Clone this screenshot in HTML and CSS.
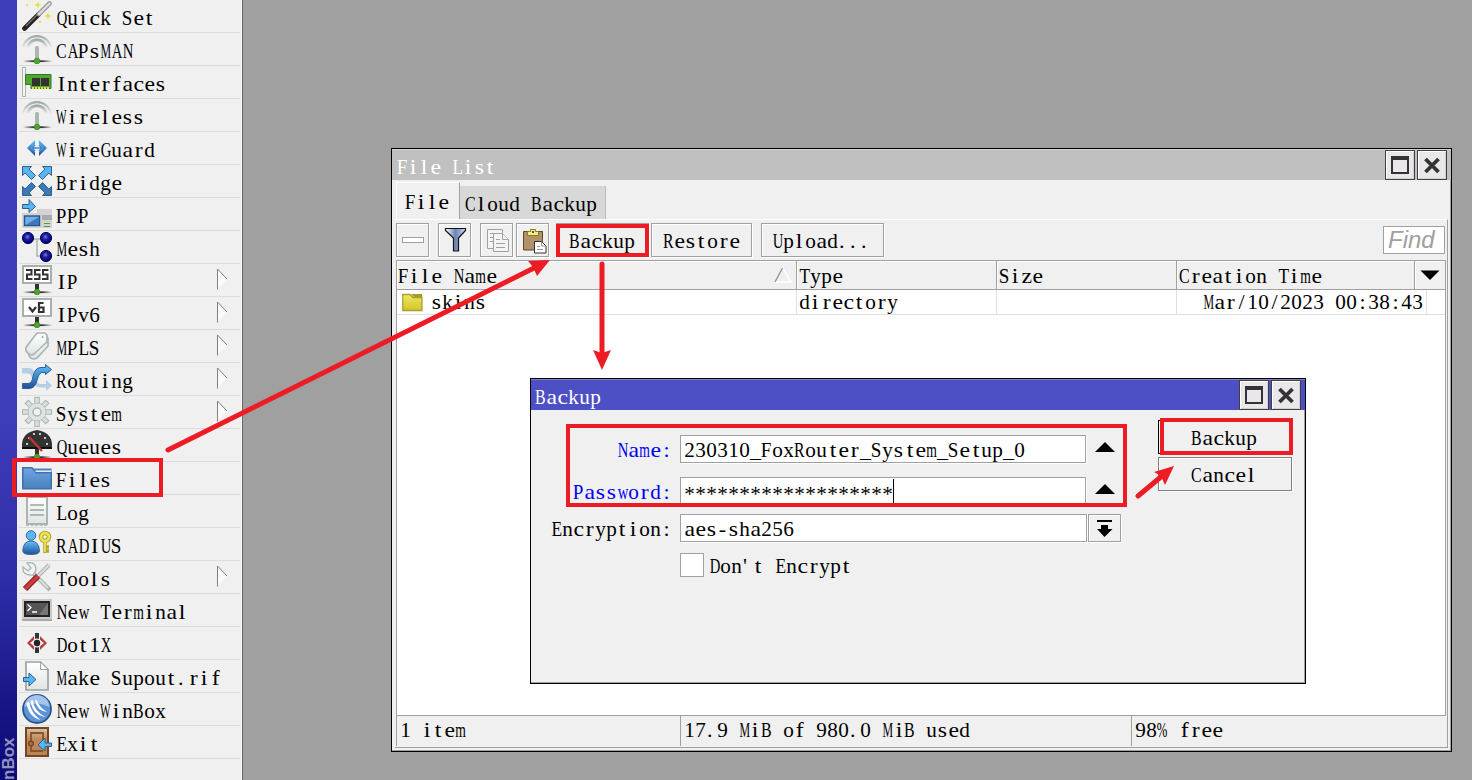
FILE: index.html
```html
<!DOCTYPE html>
<html lang="en">
<head>
<meta charset="utf-8">
<title>WinBox</title>
<link rel="stylesheet" href="styles.css">
</head>
<body>
<svg class="defs" width="0" height="0">
  <defs>
    <linearGradient id="blue" x1="0" y1="0" x2="0" y2="1"><stop offset="0" stop-color="#62c0ff"/><stop offset="1" stop-color="#1f4f98"/></linearGradient>
    <linearGradient id="fold" x1="0" y1="0" x2="0" y2="1"><stop offset="0" stop-color="#6ea6e0"/><stop offset="1" stop-color="#4a80bd"/></linearGradient>
    <linearGradient id="paper" x1="0" y1="0" x2="0" y2="1"><stop offset="0" stop-color="#fff"/><stop offset="1" stop-color="#dfe4e2"/></linearGradient>
    <linearGradient id="base"><stop offset="0" stop-color="#333" stop-opacity="0"/><stop offset=".35" stop-color="#333"/><stop offset=".65" stop-color="#333"/><stop offset="1" stop-color="#333" stop-opacity="0"/></linearGradient>
    <radialGradient id="ball" cx=".45" cy=".4" r=".55"><stop offset="0" stop-color="#7f80dc"/><stop offset=".4" stop-color="#2222a0"/><stop offset="1" stop-color="#000070"/></radialGradient>
    <linearGradient id="wood" x1="0" y1="0" x2="0" y2="1"><stop offset="0" stop-color="#dcc2a8"/><stop offset=".4" stop-color="#c08a5c"/><stop offset="1" stop-color="#bb8252"/></linearGradient>
    <linearGradient id="arc" x1="0" y1="0" x2="0" y2="1"><stop offset="0" stop-color="#9faaa8"/><stop offset="1" stop-color="#9faaa8" stop-opacity="0"/></linearGradient>
    <linearGradient id="gold" x1="0" y1="0" x2="0" y2="1"><stop offset="0" stop-color="#efe860"/><stop offset="1" stop-color="#cfc62c"/></linearGradient>
    <symbol id="node" viewBox="0 0 30 30"><rect x="1" y="26.3" width="29" height="1.8" fill="url(#base)"/><circle cx="15" cy="27" r="2.9" fill="#4fa32c" stroke="#3b8a20" stroke-width=".6"/></symbol>
    <symbol id="antenna" viewBox="0 0 30 30"><path d="M1 14A14.2 14.2 0 0 1 29 14" fill="none" stroke="url(#arc)" stroke-width="2.2"/><path d="M5.5 14A9.6 9.6 0 0 1 24.5 14" fill="none" stroke="url(#arc)" stroke-width="3"/><rect x="13" y="12" width="4" height="14" rx="1.5" fill="#abb6b3"/><use href="#node"/></symbol>
    <symbol id="corner" viewBox="0 0 14 14"><path d="M.5.5H9.5L7 3.2 13.5 9.5 9.5 13.5 3.2 7 .5 9.5Z" fill="currentColor" stroke="#315f8c"/></symbol>
  </defs>
</svg>
<main class="desktop">
  <aside class="brand"><span>nBox</span></aside>
  <nav class="menu">
    <div class="item"><svg class="ico" viewBox="0 0 30 30"><path d="M2.5 27.5 17 13" stroke="#222" stroke-width="4.6" stroke-linecap="round"/><path d="M4 25 16 13" stroke="#777" stroke-width="1.2"/><path d="M17 13 27.5 2.5" stroke="#999" stroke-width="4.6" stroke-linecap="round"/><path d="M17 13 27.5 2.5" stroke="#ddd" stroke-width="2.4" stroke-linecap="round"/><path d="M16 0 17 3 20 4 17 5 16 8 15 5 12 4 15 3ZM26 11 27 14 30 15 27 16 26 19 25 16 22 15 25 14Z" fill="#e5e046"/><path d="M4 3h2v2H4zM17 20h2v2h-2z" fill="#e5e046"/></svg><span class="t">Quick Set</span></div>
    <div class="item"><svg class="ico"><use href="#antenna"/></svg><span class="t">CAPsMAN</span></div>
    <div class="item"><svg class="ico" viewBox="0 0 30 30"><rect x=".5" y=".5" width="3" height="29" fill="#f4f6f5" stroke="#a9b4b1"/><path d="M3.5 7.5h25.5v14H9v-4H3.5z" fill="#52a630" stroke="#2f7a1b"/><path d="M10 11h8v8h-8zM19 11h8v8h-8z" fill="#333"/><path d="M10 21h17" stroke="#e8e040" stroke-width="2" stroke-dasharray="2 1"/></svg><span class="t">Interfaces</span></div>
    <div class="item"><svg class="ico"><use href="#antenna"/></svg><span class="t">Wireless</span></div>
    <div class="item"><svg class="ico" viewBox="0 0 30 30"><path d="M13 7v4L9 15l4 4v4L5 15ZM17 7v4l4 4-4 4v4l8-8Z" fill="url(#blue)"/><path d="M9.500 15h11M13 12l-3 3 3 3M17 12l3 3-3 3" fill="none" stroke="#3a86cd" stroke-width="1.500"/></svg><span class="t">WireGuard</span></div>
    <div class="item"><svg class="ico" viewBox="0 0 30 30"><g class="light"><use href="#corner" width="14" height="14"/><use href="#corner" width="14" height="14" transform="translate(30) scale(-1 1)"/></g><g class="deep"><use href="#corner" width="14" height="14" transform="translate(0 30) scale(1 -1)"/><use href="#corner" width="14" height="14" transform="translate(30 30) scale(-1)"/></g></svg><span class="t">Bridge</span></div>
    <div class="item"><svg class="ico" viewBox="0 0 30 30"><path d="M15 10h15v19H0V14h15z" fill="#d3d3d3"/><path d="M20 16h10v5H20z" fill="#aaa"/><path d="M22 24.500h6M22 27.500h6" stroke="#4da62b"/><rect x="2.500" y="17" width="15" height="9.500" fill="#75aee6" stroke="#22558c" stroke-width="1.400"/><path d="M3.500 26 17 18v8z" fill="#3b78bd"/><path d="M.5 5.500H7V.5l6.500 7-6.500 6V9.500H.5Z" fill="#57b7f5" stroke="#315f8c"/></svg><span class="t">PPP</span></div>
    <div class="item"><svg class="ico" viewBox="0 0 30 30"><path d="M10 7h10M15 7v17h5" fill="none" stroke="#abb6b3" stroke-width="1.500"/><g fill="url(#ball)" stroke="#00006a"><circle cx="6" cy="6" r="5.600"/><circle cx="24" cy="6" r="5.600"/><circle cx="24" cy="24" r="5.600"/></g></svg><span class="t">Mesh</span></div>
    <div class="item sub"><svg class="ico" viewBox="0 0 30 30"><path d="M13 18h4v9h-4z" fill="#333"/><rect x="1" y="1" width="28" height="17" fill="#fff" stroke="#a6b0ae" stroke-width="2"/><path d="M4 5H9.500v4.500H5V14H10.500M18.500 5H13v4.500h4.500V14H12M26.500 5H21v4.500h4.500V14H20" fill="none" stroke="#333" stroke-width="2"/><use href="#node"/></svg><span class="t">IP</span><svg class="tri" viewBox="0 0 12 22"><path d="M1.500 1 11 11 1.500 21Z" fill="#fafafa"/><path d="M1.500 21.500V1L11 11" fill="none" stroke="#808080"/></svg></div>
    <div class="item sub"><svg class="ico" viewBox="0 0 30 30"><path d="M13 18h4v9h-4z" fill="#333"/><rect x="1" y="1" width="28" height="17" fill="#fff" stroke="#a6b0ae" stroke-width="2"/><path d="m7 9 3.500 4.500L14 9M21.500 5H17v9h4.500V9.500H17" fill="none" stroke="#333" stroke-width="2.200"/><use href="#node"/></svg><span class="t">IPv6</span><svg class="tri" viewBox="0 0 12 22"><path d="M1.500 1 11 11 1.500 21Z" fill="#fafafa"/><path d="M1.500 21.500V1L11 11" fill="none" stroke="#808080"/></svg></div>
    <div class="item sub"><svg class="ico" viewBox="0 0 30 30"><g fill="url(#paper)" stroke="#a9b5b2" stroke-width="1.700" stroke-linejoin="round"><path d="M18 7h8v8L15 27q-3 2-6 0-4-3-1-7Z"/><path d="M15 2h8l2 2v7L12 23q-3 2-6-1-4-3-1-7Z"/></g><circle cx="20.500" cy="6" r="1" fill="#97a5a1"/></svg><span class="t">MPLS</span><svg class="tri" viewBox="0 0 12 22"><path d="M1.500 1 11 11 1.500 21Z" fill="#fafafa"/><path d="M1.500 21.500V1L11 11" fill="none" stroke="#808080"/></svg></div>
    <div class="item sub"><svg class="ico" viewBox="0 0 30 30"><path d="M0 4h7q5 0 6 7 1 9 6 9h5v-4l6 5.500-6 5.500v-3.500h-6q-6 0-8-9-1-5-4-5H0Z" fill="#b5cee3"/><path d="M.5 24.500V19.500H6q4 0 5-7 2-9 8-9h4.500V.5l6 5-6 5V8.500H20q-3 0-5 8-2 8-8 8Z" fill="url(#blue)" stroke="#2d6294"/></svg><span class="t">Routing</span><svg class="tri" viewBox="0 0 12 22"><path d="M1.500 1 11 11 1.500 21Z" fill="#fafafa"/><path d="M1.500 21.500V1L11 11" fill="none" stroke="#808080"/></svg></div>
    <div class="item sub"><svg class="ico" viewBox="0 0 30 30"><g stroke="#a9b5b2" stroke-width="5.500"><path d="M15 0v30M0 15h30M4.400 4.400l21.200 21.200M25.600 4.400 4.400 25.600"/></g><g stroke-width="3.500"><path d="M15 1v28M1 15h28M5.200 5.200l19.600 19.600M24.800 5.200 5.200 24.800" stroke="#d9dfdd"/></g><circle cx="15" cy="15" r="9" fill="#dfe4e2" stroke="#b7c0be"/><circle cx="15" cy="15" r="4" fill="#f2f2f2" stroke="#a9b5b2" stroke-width="1.500"/></svg><span class="t">System</span><svg class="tri" viewBox="0 0 12 22"><path d="M1.500 1 11 11 1.500 21Z" fill="#fafafa"/><path d="M1.500 21.500V1L11 11" fill="none" stroke="#808080"/></svg></div>
    <div class="item"><svg class="ico" viewBox="0 0 30 30"><path d="M13 18h4v9h-4z" fill="#333"/><path d="M0 19V14Q1 2 15 0 29 2 30 14v5Z" fill="#333"/><path d="M0 17h30v2H0z" fill="#111"/><path d="M4 13h2v2H4zM6 7h2v2H6zM11 3h2v2h-2zM17 3h2v2h-2zM22 7h2v2h-2zM24 13h2v2h-2z" fill="#ccc"/><path d="m7 7 13 14" stroke="#c43636" stroke-width="2.400"/><use href="#node"/></svg><span class="t">Queues</span></div>
    <div class="item"><svg class="ico" viewBox="0 0 30 30"><path d="M.8 4.800H10l4 5h15.200v16H.8Z" fill="url(#fold)" stroke="#3d74ad" stroke-width="1.600"/><path d="M11 5.500h18.500V9H14Z" fill="#4a80bd"/><path d="M13.500 8.200H29" stroke="#fff" stroke-width="1.300"/></svg><span class="t">Files</span></div>
    <div class="item"><svg class="ico" viewBox="0 0 30 30"><path d="M5 1h20v27H5z" fill="url(#paper)" stroke="#a9b5b2" stroke-width="2"/><path d="M4 .8h22M4 28.800h22" stroke="#a9b5b2" stroke-width="2" stroke-dasharray="3 1.500"/><path d="M8 9h14M8 14h14M8 19h14" stroke="#98a5a1" stroke-width="1.600"/></svg><span class="t">Log</span></div>
    <div class="item"><svg class="ico" viewBox="0 0 30 30"><path d="M.8 22Q1 12 9 12t8.500 10q0 3.500-8.500 3.500T.8 22Z" fill="url(#blue)" stroke="#426992"/><circle cx="9" cy="6.500" r="4.800" fill="#57b7f5" stroke="#426992"/><circle cx="23" cy="8" r="4" fill="none" stroke="#aaa12a" stroke-width="4.500"/><path d="M23 13v11M24 18h3M24 22h3" stroke="#b1a72a" stroke-width="3.500"/><circle cx="23" cy="8" r="4" fill="none" stroke="#eae14f" stroke-width="2.800"/><path d="M23 13v10" stroke="#eae14f" stroke-width="1.800"/></svg><span class="t">RADIUS</span></div>
    <div class="item sub"><svg class="ico" viewBox="0 0 30 30"><path d="m11 11 17 17M14 16 27 3" stroke="#a9b5b2" stroke-width="4"/><path d="m12 12 14 14M15 15 28 2" stroke="#dce1df" stroke-width="1.800"/><path d="M5 1Q14-1 14 8l-3 5Q0 14 1 5l5 4 3-3Z" fill="#f4f6f5" stroke="#a9b5b2" stroke-width="1.300"/><path d="M3 27 16 14" stroke="#8e1f24" stroke-width="6"/><path d="M3 27 16 14" stroke="#c93d3d" stroke-width="3.500"/></svg><span class="t">Tools</span><svg class="tri" viewBox="0 0 12 22"><path d="M1.500 1 11 11 1.500 21Z" fill="#fafafa"/><path d="M1.500 21.500V1L11 11" fill="none" stroke="#808080"/></svg></div>
    <div class="item"><svg class="ico" viewBox="0 0 30 30"><path d="M0 4h30v22H0z" fill="#c9c9c9"/><path d="M0 24h30v2H0z" fill="#aaa"/><rect x="3" y="7" width="24" height="14" fill="#555" stroke="#222" stroke-width="2"/><path d="m17 20 9-12v12z" fill="#777"/><path d="m5.500 9.500 3.500 3-3.500 3.500M10 17h5" fill="none" stroke="#fff" stroke-width="1.300"/></svg><span class="t">New Terminal</span></div>
    <div class="item"><svg class="ico" viewBox="0 0 30 30"><path d="M13 5h4v20h-4z" fill="#333"/><path d="M12 8v4l-4 3 4 3v4l-7-7ZM18 8v4l4 3-4 3v4l7-7Z" fill="#b53b45"/><circle cx="15" cy="15" r="4.500" fill="#eee"/><circle cx="15" cy="15" r="3.200" fill="#222"/></svg><span class="t">Dot1X</span></div>
    <div class="item"><svg class="ico" viewBox="0 0 30 30"><path d="M4 1h14.500L26 8.500V29H4z" fill="url(#paper)" stroke="#98a5a1" stroke-width="1.700"/><path d="M18.500 1v7.500H26Z" fill="#fff" stroke="#98a5a1"/><path d="M1.500 16.500H7v-4.500l7 6.500-7 6.500v-4.500H1.500Z" fill="#57b7f5" stroke="#315f8c"/></svg><span class="t">Make Supout.rif</span></div>
    <div class="item"><svg class="ico" viewBox="0 0 30 30"><circle cx="15" cy="15" r="14" fill="#5d94d8" stroke="#2a568d" stroke-width="1.800"/><path d="M2.500 13A12.500 12 0 0 1 27.500 13Q15 6 2.500 13Z" fill="#a6c4ea"/><path d="M4.500 9q2 14 14 17Q9 19 7 8ZM8.500 7q2 14 15 16Q12 17 10.500 6ZM13 6q2 11 12 12Q17 13 14.500 6Z" fill="#fff"/></svg><span class="t">New WinBox</span></div>
    <div class="item"><svg class="ico" viewBox="0 0 30 30"><rect x="4" y="1" width="22" height="28" fill="url(#wood)" stroke="#754420" stroke-width="2"/><path d="M9 15V6h12v8M9 18v6h12" fill="none" stroke="#895429" stroke-width="1.800"/><circle cx="9" cy="16.500" r="2.400" fill="#a96f43" stroke="#754420" stroke-width="1.300"/><path d="M29.500 16H23v-5l-7 7 7 6v-4.500h6.500Z" fill="#57b7f5" stroke="#315f8c"/></svg><span class="t">Exit</span></div>
  </nav>

  <section class="window files">
    <header class="bar"><span class="t">File List</span><div class="ctl"><i><svg viewBox="0 0 28 28"><path d="M6 7h16v15H6z" fill="none" stroke="#333" stroke-width="2"/><path d="M5 7h18" stroke="#333" stroke-width="4"/></svg></i><i><svg viewBox="0 0 28 28"><path d="m7.500 8 13 13m0-13-13 13" stroke="#333" stroke-width="3.800"/></svg></i></div></header>
    <div class="tabs"><span class="tab on t">File</span><span class="tab t">Cloud Backup</span></div>
    <div class="pane">
      <div class="tools">
        <span class="btn sq"><svg viewBox="0 0 31 32"><rect x="5.500" y="13.500" width="21" height="5" fill="#fff" stroke="#a0a0a0"/></svg></span>
        <span class="btn sq gap"><svg viewBox="0 0 31 32"><defs><linearGradient id="fun"><stop offset="0" stop-color="#fff"/><stop offset=".5" stop-color="#6f83b4"/><stop offset="1" stop-color="#cdd8ff"/></linearGradient></defs><path d="M6.500 4.500h20v2L19.500 14v13h-5V14L6.500 6.500Z" fill="url(#fun)" stroke="#111" stroke-width="1.200"/></svg></span>
        <span class="btn sq gap"><svg viewBox="0 0 31 32"><g fill="#f4f4f4" stroke="#a0a0a0"><path d="M6.500 5.500h15v19h-15z"/><path d="M9 9.500h9M9 13.500h5M9 17.500h5" /><path d="M12.500 9.500h9l6 6v12h-15z"/><path d="M21.500 9.500v6h6M15 15.500h4M15 19.500h9M15 23.500h9"/></g></svg></span>
        <span class="btn sq paste"><svg viewBox="0 0 31 32"><path d="M6.500 7.500h19v18.500h-19z" fill="#b09268" stroke="#5f4826"/><path d="M10.500 11.500v-4h3v-2h5v2h3v4z" fill="#f2ec83" stroke="#8a7a2a"/><path d="M15 7h2v2h-2z" fill="#554"/><path d="M17.500 17.500h7l4.500 4.500v7H17.500z" fill="#fff" stroke="#333"/><path d="M24.500 17.500V22H29M20 22.500h3M20 25.500h6" fill="none" stroke="#999"/></svg></span>
        <span class="btn b1 t">Backup</span><span class="btn b2 t">Restore</span><span class="btn b3 t">Upload...</span>
        <span class="find">Find</span>
      </div>
      <div class="table">
        <div class="tr th"><span class="c1"><b class="t">File Name</b><svg width="18" height="16" viewBox="0 0 18 16"><path d="M1 15H17L9 1" fill="none" stroke="#fff" stroke-width="1.500"/><path d="M1 15 8.500 1" stroke="#909090" stroke-width="1.300"/></svg></span><span class="c2 t">Type</span><span class="c3 t">Size</span><span class="c4 t">Creation Time</span><span class="c5"><svg width="20" height="10"><path d="M.5.500h19L10 10z"/></svg></span></div>
        <div class="tr td"><span class="c1"><svg width="21" height="19" viewBox="0 0 21 19"><path d="M.8 1.500H8l3 3h9v13H.8z" fill="url(#gold)" stroke="#aaa12c" stroke-width="1.300"/><path d="M9 1h11v3h-8z" fill="#a49d2c"/></svg><b class="t">skins</b></span><span class="c2 t">directory</span><span class="c3"></span><span class="c4 t">Mar/10/2023 00:38:43</span><span class="c5"></span></div>
      </div>
      <footer class="status"><span class="s1 t">1 item</span><span class="s2 t">17.9 MiB of 980.0 MiB used</span><span class="s3 t">98% free</span></footer>
    </div>
  </section>

  <section class="window dialog">
    <header class="bar"><span class="t">Backup</span><div class="ctl"><i><svg viewBox="0 0 28 28"><path d="M6 7h16v15H6z" fill="none" stroke="#333" stroke-width="2"/><path d="M5 7h18" stroke="#333" stroke-width="4"/></svg></i><i><svg viewBox="0 0 28 28"><path d="m7.500 8 13 13m0-13-13 13" stroke="#333" stroke-width="3.800"/></svg></i></div></header>
    <div class="content">
      <div class="form">
        <div class="row r1"><label class="t link">Name:</label><span class="field t">230310_FoxRouter_System_Setup_0</span><svg class="up" width="20" height="10"><path d="M0 10h20L10 0z"/></svg></div>
        <div class="row r2"><label class="t link">Password:</label><span class="field pass"><b class="t">*******************</b><i class="caret"></i></span><svg class="up" width="20" height="10"><path d="M0 10h20L10 0z"/></svg></div>
        <div class="row r3"><label class="t">Encryption:</label><span class="field wide t">aes-sha256</span><span class="drop"><svg width="16" height="18"><path d="M0 0h15v2H0zM4 5h7v4h4.500L7.500 17 0 9h4z"/></svg></span></div>
        <div class="row r4"><label></label><span class="check"></span><span class="t">Don't Encrypt</span></div>
      </div>
      <div class="actions"><span class="act main t">Backup</span><span class="act t">Cancel</span></div>
    </div>
  </section>

  <svg class="marks" width="1472" height="780" fill="none" stroke="#ed1c24" stroke-width="4">
    <path d="M14 460H161V495H14ZM558 226H647V255H558ZM568 426H1125V505H568ZM1162 420H1291V453H1162Z"/>
    <g stroke-width="5" stroke-linecap="round"><path d="M168 450 535 267.500M602 264V352M1138 496 1162 476"/></g>
    <g fill="#ed1c24" stroke="none"><path d="m550 260-22 1 5 6 4 9ZM602 370l-9-20 9 3 9-3ZM1174 466l-20 6 7 4 4 9Z"/></g>
  </svg>
</main>
<script src="grid.js"></script>
</body>
</html>
```
FILE: styles.css
```css
* { box-sizing: border-box; }
body { margin: 0; overflow: hidden; }
b, i { font-weight: normal; font-style: normal; }
svg { display: block; flex: none; }
.defs { position: absolute; }
.desktop {
  position: relative; display: flex; width: 1472px; height: 780px; overflow: hidden;
  background: #a0a0a0; color: #000;
  font: 22px/28px "Liberation Serif", "Times New Roman", serif;
}
.t { white-space: nowrap; word-spacing: 5.5px; font-kerning: none; }
.t u { display: inline-block; text-decoration: none; }

.brand {
  width: 17px; height: 780px; display: flex; align-items: flex-end; overflow: hidden;
  background: linear-gradient(#403dbb 0, #403dbb 400px, #2f2da6 580px, #12107e 740px, #0c0a78);
}
.brand span {
  writing-mode: vertical-rl; transform: rotate(180deg); width: 17px; height: 42px;
  font: bold 17px/17px "Liberation Sans", Arial, sans-serif; color: #9294bd;
}
.menu { width: 226px; height: 780px; padding-left: 2px; background: #f0f0f0; border-right: 1px solid #686868; box-shadow: inset -1px 0 #f8f8f8; }
.item { display: flex; width: 221px; height: 33px; padding: 1px 0 0 3px; border-bottom: 1px solid #dcdcdc; }
.item .t { margin: 3px 0 0 4px; }
.ico { width: 30px; height: 30px; }
.light { color: #57b7f5; }
.deep { color: #3b79b8; }
.tri { width: 12px; height: 22px; margin: 3px 12px 0 auto; }

.window { position: absolute; border: 1px solid #000; background: #f0f0f0; }
.files { left: 391px; top: 148px; width: 1061px; height: 604px; box-shadow: inset -1px -1px #a0a0a0; }
.dialog { left: 530px; top: 378px; width: 776px; height: 306px; box-shadow: inset -1px -1px #a0a0a0; }
.bar { display: flex; justify-content: space-between; height: 31px; padding: 1px 4px 0 5px; color: #fff; background: #c0c0c0; border-top: 1px solid #d4d4d4; }
.dialog .bar { background: #4d50c4; border-color: #7e80c8; padding-left: 4px; }
.bar .t { margin-top: 2px; }
.ctl { display: flex; gap: 2px; margin-top: -1px; }
.ctl i { width: 30px; height: 30px; border: 1px solid #404040; background: #e9e7e9; box-shadow: inset 1px 1px #fff, inset -1px -1px #d0d0d0; }
.tabs { display: flex; align-items: flex-end; height: 39px; padding: 1px 4px 0; }
.tab { height: 33px; padding: 4px 6px 0 5px; background: #d8d8d8; border-right: 1px solid #bbb; }
.tab.on { width: 64px; height: 37px; padding: 5px 0 0 8px; background: #f0f0f0; border: solid; border-width: 1px 1px 0; border-color: #fff #a0a0a0 #fff #fff; }
.tab:last-child { width: 146px; }
.pane { margin: 0 3px; height: 529px; border-top: 1px solid #fff; border-right: 1px solid #a0a0a0; border-bottom: 1px solid #a0a0a0; padding: 0 1px; }
.tools { display: flex; height: 40px; padding-top: 3px; }
.btn { height: 34px; border: 1px solid #a0a0a0; box-shadow: inset 1px 1px #fff, 1px 1px #fff; padding: 3px 0 0 11px; }
.btn.sq { width: 33px; padding: 0; }
.gap { margin-left: 9px; }
.paste { margin-left: 3px; }
.b1 { width: 93px; margin-left: 7px; padding-left: 12px; }
.b2 { width: 101px; margin-left: 2px; }
.b3 { width: 123px; margin-left: 9px; padding-left: 10px; }
.find { width: 62px; height: 28px; margin: 3px 1px 0 auto; padding-left: 4px; border: 1px solid #a0a0a0; background: #fff; color: #a0a0a0; font: italic 24px/25px "Liberation Sans", Arial, sans-serif; }
.table { width: 1050px; height: 456px; background: #fff; border: 1px solid #a0a0a0; }
.tr { display: flex; width: 1048px; }
.th { height: 29px; background: #f0f0f0; border-bottom: 1px solid #a0a0a0; }
.td { height: 25px; border-bottom: 1px solid #e0e0e0; }
.tr > span { border-right: 1px solid #e0e0e0; padding: 1px 0 0 2px; height: 100%; }
.tr.th > span { border-color: #a0a0a0; box-shadow: inset 1px 1px #fff; }
.td > span { line-height: 22px; }
.tr .c1 { width: 400px; display: flex; justify-content: space-between; padding-left: 1px; }
.td .c1 { justify-content: flex-start; gap: 8px; padding-left: 5px; }
.c1 svg { margin: 5px 4px 0 0; }
.td .c1 svg { margin: 2px 0 0; }
.c2 { width: 200px; }
.c3 { width: 180px; }
.c4 { width: 238px; }
.tr .c5 { width: 30px; border: 0; padding: 9px 0 0 5px; }
.td .c4 { width: 250px; padding-left: 26px; }
.td .c5 { width: 18px; }
.status { display: flex; height: 30px; }
.status > span { border-left: 1px solid #a0a0a0; padding: 0 0 0 3px; }
.s1 { width: 284px; }
.s2 { width: 451px; }

.content { display: flex; justify-content: space-between; padding: 10px 13px 0 20px; }
.form { padding-top: 15px; }
.row { display: flex; height: 28px; }
label { width: 121px; margin-right: 8px; text-align: right; padding-top: 1px; }
.link { color: #0000f0; }
.field { width: 406px; height: 28px; border: 1px solid #a0a0a0; background: #fff; padding: 0 0 0 3px; line-height: 27px; box-shadow: 1px 1px #fff; }
.wide { width: 407px; }
.up { margin: 7px 0 0 9px; }
.r2 { margin-top: 14px; }
.r3 { margin-top: 9px; }
.r4 { margin-top: 11px; }
.pass { display: flex; }
.pass b { margin-top: 2px; }
.caret { width: 1px; height: 26px; margin-top: 1px; background: #000; }
.drop { width: 33px; height: 28px; margin-left: 1px; padding: 5px 0 0 8px; border: 1px solid #a0a0a0; box-shadow: inset 1px 1px #fff, 1px 1px #fff; }
.check { width: 24px; height: 24px; background: #fff; border: 1px solid #a0a0a0; }
.r4 .t { margin: -1px 0 0 5px; }
.actions { display: flex; flex-direction: column; gap: 3px; width: 134px; }
.act { height: 34px; padding: 3px 0 0 32px; border: 1px solid #808080; box-shadow: inset 1px 1px #fff, 1px 1px #fff; }
.act.main { border-color: #000; }
.marks { position: absolute; left: 0; top: 0; pointer-events: none; }
```
FILE: grid.js
```js
// Set text on an 11px character grid: each glyph is centred in its cell,
// and glyphs wider than the cell are condensed to fit.
const CELL = 11;
const INK = 10.6;
const pen = document.createElement('canvas').getContext('2d');
pen.font = '22px "Liberation Serif", "Times New Roman", serif';
document.querySelectorAll('.t').forEach((el) => {
  const text = el.textContent;
  el.textContent = '';
  for (const ch of text) {
    if (ch === ' ') {
      el.append(' ');
      continue;
    }
    const cell = document.createElement('u');
    cell.textContent = ch;
    const natural = pen.measureText(ch).width;
    const side = (CELL - natural) / 2;
    const left = ch === '.' || ch === "'" ? 1 : side;
    cell.style.marginLeft = left + 'px';
    cell.style.marginRight = 2 * side - left + 'px';
    if (natural > INK && ch !== '_') {
      cell.style.transform = 'scaleX(' + INK / natural + ')';
    } else if (/[a-z]/.test(ch)) {
      cell.style.transform = 'scaleX(1.08)';
    }
    el.append(cell);
  }
});
```
